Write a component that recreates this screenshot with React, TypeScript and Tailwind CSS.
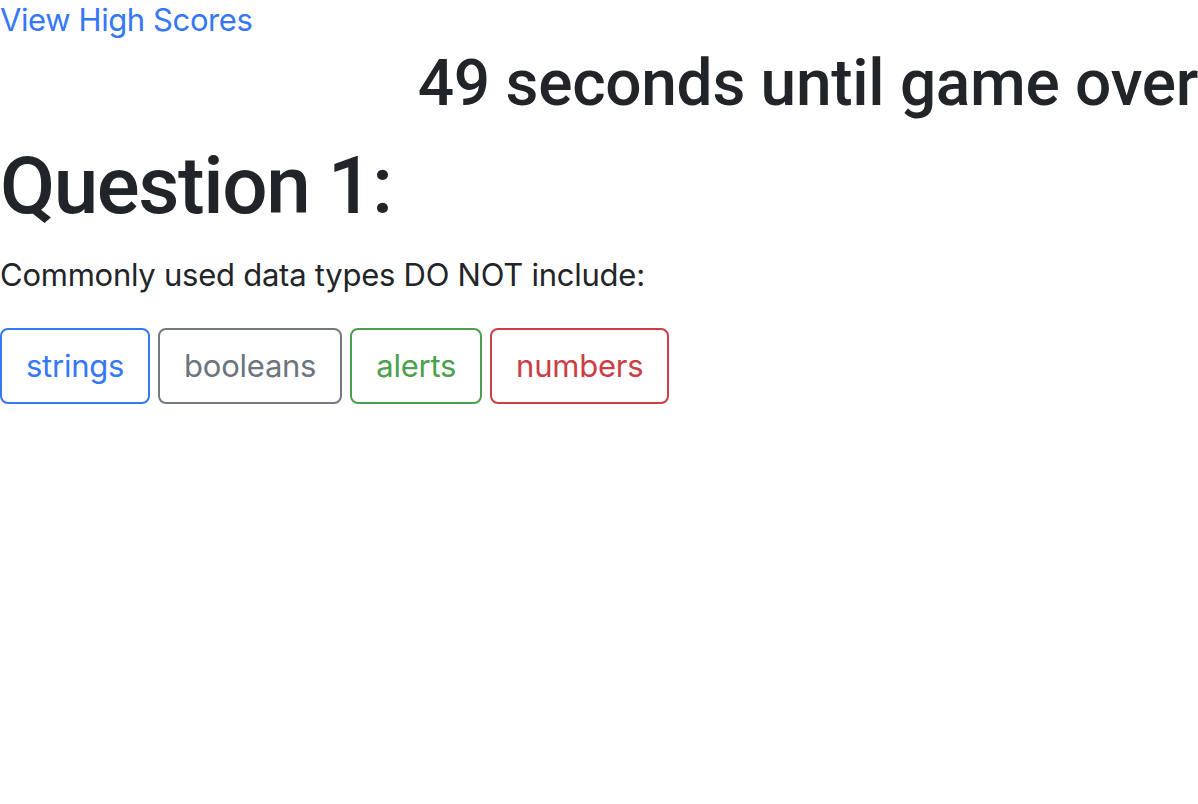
const answers = [
  { label: "strings", cls: "border-[#3478f6] text-[#3478f6]" },
  { label: "booleans", cls: "border-[#737a82] text-[#6c757d]" },
  { label: "alerts", cls: "border-[#4c9f4c] text-[#4c9f4c]" },
  { label: "numbers", cls: "border-[#cc3d45] text-[#cc3d45]" },
];

export default function App() {
  return (
    <div className="min-h-screen bg-white text-[#212529] font-['Inter','Liberation_Sans',sans-serif]">
      <a href="#" className="block text-[31px] leading-[40px] tracking-[-0.4px] text-[#3478f6]">
        View High Scores
      </a>

      <div className="flex justify-end">
        <h2 className="text-[64px] leading-[88px] font-medium tracking-[-0.3px] font-['Roboto','Inter',sans-serif]">
          49 seconds until game over
        </h2>
      </div>

      <div className="mt-[10px]">
        <h1 className="text-[80px] leading-[96px] font-medium tracking-[-1.4px] font-['Roboto','Inter',sans-serif]">
          Question 1:
        </h1>
        <p className="mt-[17px] text-[31px] leading-[48px] tracking-[-0.25px]">
          Commonly used data types DO NOT include:
        </p>

        <div className="mt-[29px] flex gap-[8px]">
          {answers.map((a) => (
            <button
              key={a.label}
              className={`h-[76px] px-[24px] border-2 rounded-[8px] bg-white text-[31px] leading-[48px] tracking-[-0.25px] ${a.cls}`}
            >
              {a.label}
            </button>
          ))}
        </div>
      </div>
    </div>
  );
}
